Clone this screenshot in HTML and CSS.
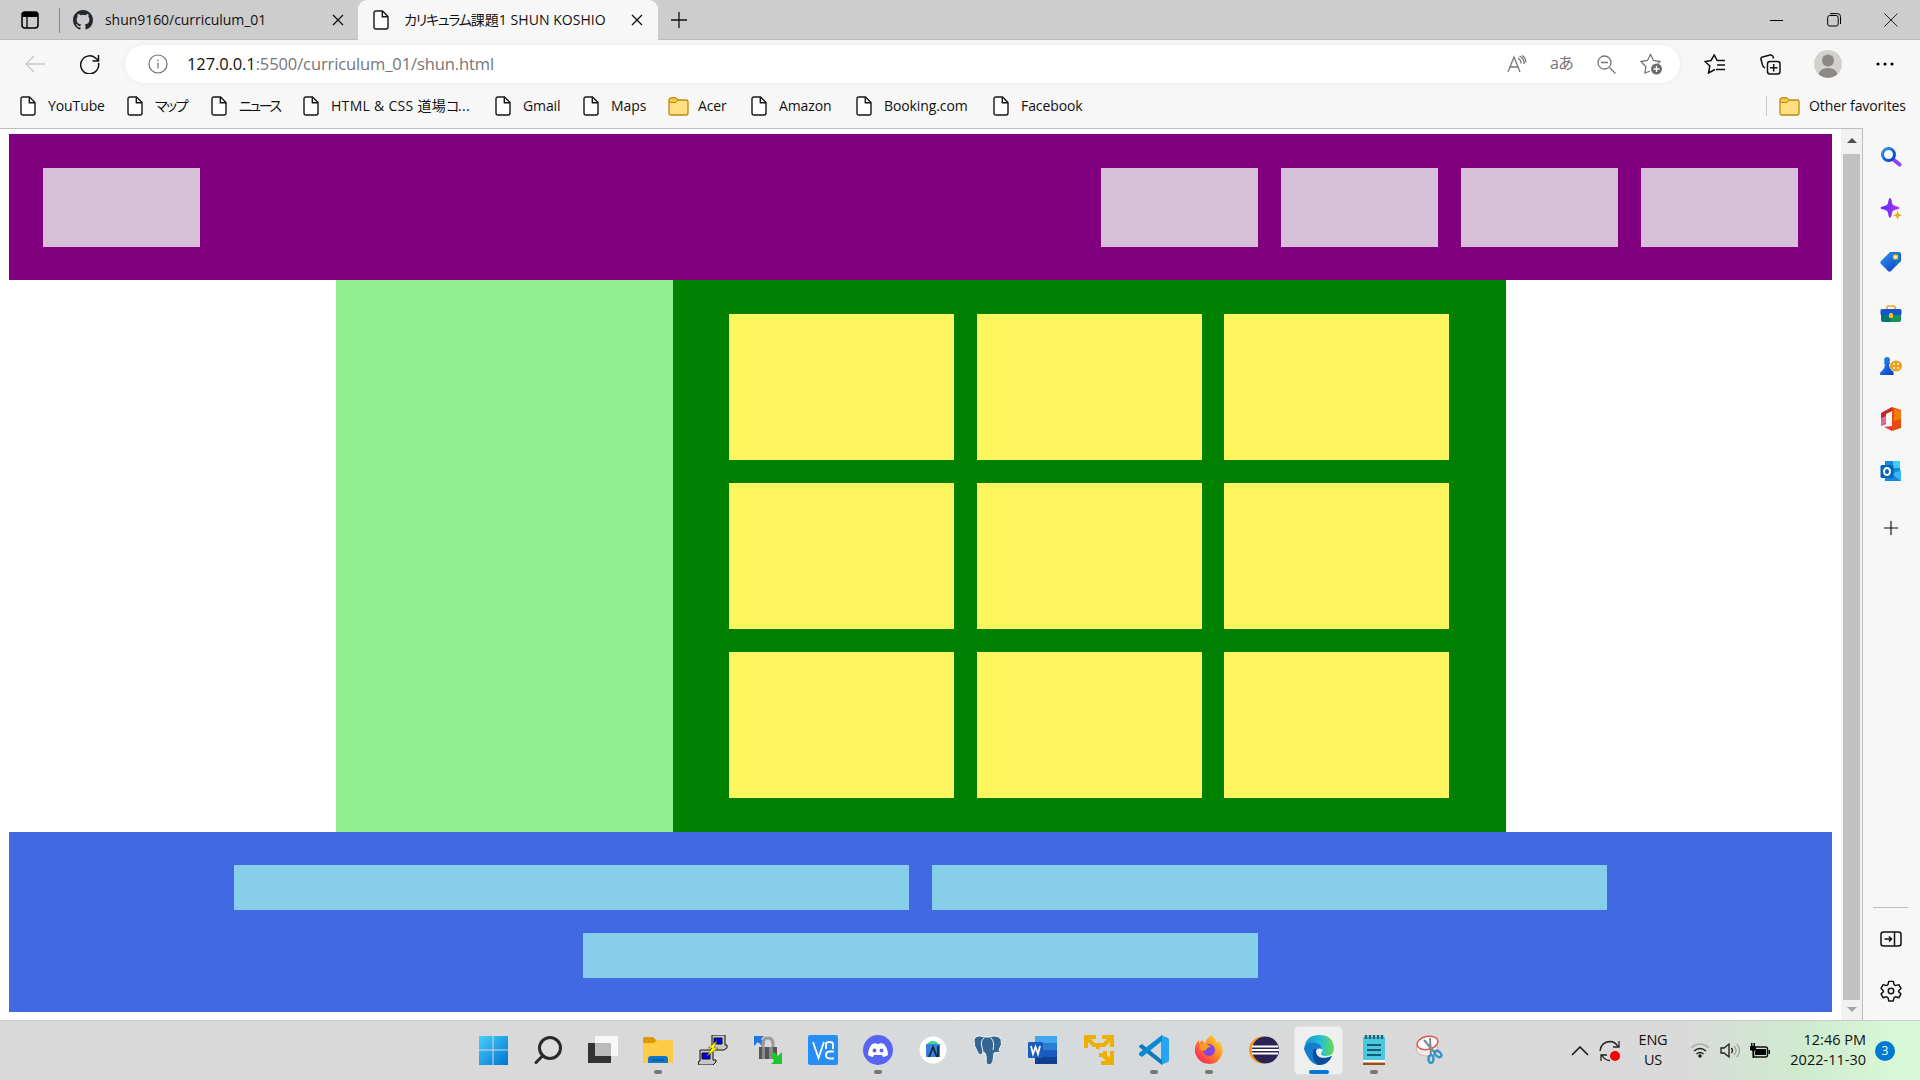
FILE: index.html
```html
<!DOCTYPE html>
<html lang="ja">
<head>
<meta charset="utf-8">
<title>カリキュラム課題1 SHUN KOSHIO</title>
<link rel="stylesheet" href="styles.css">
</head>
<body>
<svg class="defs" width="0" height="0" aria-hidden="true">
  <symbol id="file" viewBox="0 0 16 20"><path d="M3 1h6.500L15 6.500V17q0 2-2 2H3q-2 0-2-2V3q0-2 2-2zM9.300 1.300v5.400h5.400" fill="#fff" stroke="#161616" stroke-width="1.400"/></symbol>
  <symbol id="folder" viewBox="0 0 21 19"><path d="M1 4q0-3 2.500-3h4L10 3h8q2 0 2 2v11q0 2-2 2H3q-2 0-2-2z" fill="#ffdf82" stroke="#b88a12" stroke-width="1.300"/><path d="M1 4q0-3 2.500-3H8l2 2-2 2.500H3Q1 5.500 1 4z" fill="#f9ca3e" stroke="#b88a12"/></symbol>
  <symbol id="x" viewBox="0 0 12 12"><path d="M1 1l10 10M11 1L1 11" stroke="#111" stroke-width="1.300"/></symbol>
  <symbol id="plus" viewBox="0 0 18 18"><path d="M9 1v16M1 9h16" stroke="#111" stroke-width="1.300"/></symbol>
</svg>
<div class="screen">
  <header class="tabs">
    <div class="workspaces"><svg width="18" height="18" viewBox="0 0 18 18"><rect x="1" y="1" width="16" height="16" rx="3" fill="none" stroke="#000" stroke-width="1.500"/><path d="M1 6V4q0-3 3-3h10q3 0 3 3v2z"/><path d="M6 6v11" stroke="#000" stroke-width="1.300"/></svg></div>
    <div class="tab">
      <svg width="20" height="20" viewBox="0 0 16 16"><path fill="#24292f" d="M8 0C3.580 0 0 3.580 0 8c0 3.540 2.290 6.530 5.470 7.590.4.070.55-.17.55-.38 0-.19-.01-.82-.01-1.490-2.010.37-2.530-.49-2.690-.94-.09-.23-.48-.94-.82-1.130-.28-.15-.68-.52-.01-.53.63-.01 1.080.58 1.230.82.72 1.210 1.870.87 2.330.66.070-.52.28-.87.51-1.070-1.780-.2-3.640-.89-3.640-3.950 0-.87.31-1.590.82-2.150-.08-.2-.36-1.020.08-2.120 0 0 .67-.21 2.200.82a7.600 7.600 0 0 1 4 0c1.530-1.040 2.200-.82 2.200-.82.44 1.100.16 1.920.08 2.120.51.56.82 1.270.82 2.150 0 3.070-1.870 3.750-3.650 3.950.29.25.54.73.54 1.480 0 1.070-.01 1.930-.01 2.200 0 .21.15.46.55.38A8 8 0 0 0 16 8c0-4.420-3.580-8-8-8z"/></svg>
      <span class="tab-title">shun9160/curriculum_01</span><svg width="12" height="12"><use href="#x"/></svg>
    </div>
    <div class="tab active">
      <svg width="16" height="20"><use href="#file"/></svg>
      <span class="tab-title"><span class="kana">カリキュラム</span>課題1 SHUN KOSHIO</span><svg width="12" height="12"><use href="#x"/></svg>
    </div>
    <svg class="new-tab" width="18" height="18"><use href="#plus"/></svg>
    <div class="window-buttons">
      <svg width="14" height="14"><path d="M0 7.500h13" stroke="#000"/></svg>
      <svg width="14" height="14" fill="none" stroke="#000"><rect x=".7" y="2.500" width="10.500" height="10.500" rx="2"/><path d="M3 .6h7.500q3 0 3 3V11"/></svg>
      <svg width="14" height="14"><path d="M.5.5l13 13M13.500.5l-13 13" stroke="#222"/></svg>
    </div>
  </header>

  <div class="toolbar">
    <div class="cell back"><svg width="20" height="18" fill="none" stroke="#c9c9c9" stroke-width="1.400"><path d="M20 9H1M9 1L1 9l8 8"/></svg></div>
    <div class="cell refresh"><svg width="20" height="20" fill="none" stroke="#111" stroke-width="1.500"><path d="M18.500 9A9 9 0 1 1 15.500 4l3 2.500M18.500 1v6h-6"/></svg></div>
    <div class="address">
      <div class="cell info"><svg width="20" height="20" fill="none" stroke="#707070" stroke-width="1.200"><circle cx="10" cy="10" r="9"/><path d="M10 8.500v6M10 5.500v1.500"/></svg></div>
      <div class="url"><b>127.0.0.1</b>:5500/curriculum_01/shun.html</div>
      <div class="cell"><svg width="20" height="18" fill="none" stroke="#767676" stroke-width="1.300"><path d="M1 17L7 2l6 15M3.200 12h7.600M11 3q3 2 3 5.500M12.500 1q5 2.500 4.500 8M15 .5q4 2.500 4 7"/></svg></div>
      <div class="cell translate">aあ</div>
      <div class="cell"><svg width="19" height="19" fill="none" stroke="#767676" stroke-width="1.300"><circle cx="7.500" cy="7.500" r="6.500"/><path d="M4 7.500h7M12.500 12.500l6 6"/></svg></div>
      <div class="cell"><svg width="23" height="22" fill="none" stroke="#767676" stroke-width="1.300"><path d="M10 18l-5 2 .8-6.500L1 8.500l6.500-1L10.500 1.500l3 6 6.500 1-2 2"/><circle cx="16.500" cy="16" r="5.500" fill="#6c6c6c" stroke="none"/><path d="M13.500 16h6M16.500 13v6" stroke="#fff"/></svg></div>
    </div>
    <div class="cell w70"><svg width="22" height="20" fill="none" stroke="#111" stroke-width="1.500"><path d="M10 16l-5.500 3 1.300-7L1 7.500l6-1 3.200-5.500 3 5.500H21M13 11h8M12 15.500h9M10 16l1-.5"/></svg></div>
    <div class="cell w40"><svg width="21" height="21" fill="none" stroke="#111" stroke-width="1.500"><rect x="7.500" y="7.500" width="12.500" height="12.500" rx="2.500"/><path d="M13.700 10v7.500M10 13.700h7.500M5 14Q3 13 2.500 11L1 5.500Q.5 3.500 2.500 3L10 1q2-.5 3 1.500l.5 2"/></svg></div>
    <div class="cell w76"><svg width="28" height="28"><circle cx="14" cy="14" r="14" fill="#d3d1ce"/><circle cx="14" cy="10.500" r="6" fill="#8c8885"/><path d="M4.500 24q2-6 9.500-6t9.500 6A14 14 0 0 1 4.500 24z" fill="#8c8885"/></svg></div>
    <div class="cell w38"><svg width="18" height="4"><circle cx="2" cy="2" r="1.600"/><circle cx="9" cy="2" r="1.600"/><circle cx="16" cy="2" r="1.600"/></svg></div>
  </div>

  <nav class="bookmarks">
    <div class="mark"><svg width="16" height="20"><use href="#file"/></svg><span>YouTube</span></div>
    <div class="mark"><svg width="16" height="20"><use href="#file"/></svg><span class="kana">マップ</span></div>
    <div class="mark"><svg width="16" height="20"><use href="#file"/></svg><span class="kana tight">ニュース</span></div>
    <div class="mark long"><svg width="16" height="20"><use href="#file"/></svg><span>HTML &amp; CSS 道場<span class="kana">コ</span>...</span></div>
    <div class="mark"><svg width="16" height="20"><use href="#file"/></svg><span>Gmail</span></div>
    <div class="mark"><svg width="16" height="20"><use href="#file"/></svg><span>Maps</span></div>
    <div class="mark folder"><svg width="21" height="19"><use href="#folder"/></svg><span>Acer</span></div>
    <div class="mark"><svg width="16" height="20"><use href="#file"/></svg><span>Amazon</span></div>
    <div class="mark"><svg width="16" height="20"><use href="#file"/></svg><span>Booking.com</span></div>
    <div class="mark"><svg width="16" height="20"><use href="#file"/></svg><span>Facebook</span></div>
    <div class="mark folder other"><svg width="21" height="19"><use href="#folder"/></svg><span>Other favorites</span></div>
  </nav>

  <div class="browser-body">
    <main class="page">
      <div class="page-header"><div class="logo"></div><div class="menu"><i></i><i></i><i></i><i></i></div></div>
      <div class="page-main">
        <aside class="page-side"></aside>
        <section class="cards"><i></i><i></i><i></i><i></i><i></i><i></i><i></i><i></i><i></i></section>
      </div>
      <footer class="page-footer"><i></i><i></i><i></i></footer>
    </main>
    <div class="scrollbar"><span class="up"></span><span class="thumb"></span><span class="down"></span></div>
    <aside class="sidebar">
      <div class="tool"><svg width="22" height="22"><defs><linearGradient id="b" x2="1" y2="1"><stop stop-color="#2f9bea"/><stop offset="1" stop-color="#0b35cc"/></linearGradient></defs><path d="M14 14l5.500 4.500" stroke="#8b45f4" stroke-width="4" stroke-linecap="round"/><circle cx="8.500" cy="8.500" r="6" fill="#f4faff" stroke="url(#b)" stroke-width="3"/></svg></div>
      <div class="tool"><svg width="22" height="22"><defs><linearGradient id="v" x2="1"><stop stop-color="#5426ff"/><stop offset="1" stop-color="#b43bf5"/></linearGradient></defs><path d="M10 0q1.500 0 2 5 .5 2.500 3.500 3 4 .8 4 2t-4 1.700q-3 .5-3.500 3-.7 5-2 5t-2-5q-.5-2.500-3.500-3Q.5 11 .5 10t4-2Q7.500 7.500 8 5q.7-5 2-5z" fill="url(#v)"/><path d="M17.500 12.500l1.200 3.500 3.300 1.300-3.300 1.200-1.200 3.500-1.200-3.500-3.300-1.200 3.300-1.300z" fill="#f2aa0d"/></svg></div>
      <div class="tool"><svg width="22" height="22"><path d="M10 1h9q2 0 2 2v7L11 20q-1.500 1.300-3 0L1 13q-1.300-1.500 0-3z" fill="url(#b)"/><path d="M13 2h6q1 0 1 1v7l-9 9Q20 9 13 2z" fill="#087fc5"/><circle cx="15.500" cy="6" r="2" fill="#fff" stroke="#ffbc20" stroke-width="1.500"/></svg></div>
      <div class="tool"><svg width="22" height="18"><path d="M7 6V2.500Q7 1 8.500 1h5Q15 1 15 2.500V6" fill="none" stroke="#e9aa19" stroke-width="1.700"/><path d="M1 7h20v8q0 2-2 2H3q-2 0-2-2z" fill="#06776d"/><path d="M11 7h9v10h-9z" fill="#149553"/><rect x=".5" y="4" width="21" height="6" rx="1.500" fill="#1454cf"/><rect x="9" y="8" width="4" height="5" rx="1.500" fill="#ffc42c"/></svg></div>
      <div class="tool"><svg width="22" height="20"><ellipse cx="16" cy="10" rx="6" ry="5.500" fill="#eaa31c"/><g fill="#fff4c9"><circle cx="14" cy="8" r="1.100"/><circle cx="18" cy="8" r="1.100"/><circle cx="14" cy="12" r="1.100"/><circle cx="18" cy="12" r="1.100"/></g><path d="M7 1q3 0 3 3 0 1.500-1 2.500h1V8H9q0 4 3 7 2 0 1.500 4H0q0-4 2-4 3-3 3-7H4V6.500h1Q4 5.500 4 4q0-3 3-3z" fill="url(#b)"/></svg></div>
      <div class="tool"><svg width="22" height="24"><path d="M1 6L12 0v4L6 7v10l-5 2z" fill="#c8242b"/><path d="M1 11l5-2v7l-5 3z" fill="#e26a9d"/><path d="M12 0l9 3v18l-9 3z" fill="#e84a0b"/><path d="M14 2l7 2v8l-7 2z" fill="#f37b0c"/><path d="M4 20l8-1v5z" fill="#e9373c"/></svg></div>
      <div class="tool"><svg width="22" height="22"><path d="M5 1h15v10l1 1v9H5z" fill="#1688dc"/><path d="M13 1h7v7h-7z" fill="#40caff"/><path d="M12 14l9-4v11z" fill="#38baf0"/><rect x=".5" y="5" width="13" height="13" rx="1.500" fill="#0465b6"/><ellipse cx="7" cy="11.500" rx="3" ry="3.500" fill="none" stroke="#fff" stroke-width="2"/></svg></div>
      <div class="tool add"><svg width="16" height="16" viewBox="0 0 18 18"><use href="#plus"/></svg></div>
      <hr>
      <div class="tool"><svg width="22" height="16" fill="none" stroke="#111" stroke-width="1.500"><rect x="1" y="1" width="20" height="14" rx="2.500"/><path d="M14.500 1v14M4.500 8h7M9 5.500L11.500 8 9 10.500"/></svg></div>
      <div class="tool"><svg width="22" height="22" viewBox="0 0 24 24" fill="none" stroke="#111" stroke-width="1.600" stroke-linejoin="round"><circle cx="12" cy="12" r="3"/><path d="M9.500 1.500h5l.8 3.600 1.700 1 3.500-1.100 2.400 4.200-2.600 2.500v1l2.600 2.500-2.400 4.200-3.500-1.100-1.700 1-.8 3.500h-5l-.8-3.500-1.700-1-3.500 1.100-2.400-4.200 2.600-2.500v-1L1.100 9.200 3.500 5 7 6.100l1.700-1z"/></svg></div>
    </aside>
  </div>

  <footer class="taskbar">
    <div class="apps">
      <div class="app"><svg width="30" height="30"><defs><linearGradient id="w" x2="1" y2="1"><stop stop-color="#45d0fb"/><stop offset="1" stop-color="#0072d2"/></linearGradient></defs><path d="M1 1h13.500v13.500H1zM15.500 1H30v13.500H15.500zM1 15.500h13.500V30H1zM15.500 15.500H30V30H15.500z" fill="url(#w)"/></svg></div>
      <div class="app"><svg width="30" height="30" fill="none" stroke="#292929" stroke-width="3"><circle cx="17" cy="13" r="10.500" fill="#ddd"/><path d="M10 20.500L3 27.500" stroke-linecap="round"/></svg></div>
      <div class="app"><svg width="30" height="30"><path d="M0 8h23v20H0z" fill="#333"/><path d="M7 1h23v20H7z" fill="#f7f7f7"/><path d="M7 8h16v13H7z" fill="#bbb"/></svg></div>
      <div class="app open"><svg width="30" height="30"><path d="M0 4q0-2 2-2h8l3 3h15q2 0 2 2v6H0z" fill="#dc9904"/><path d="M0 8h11l3-3h14q2 0 2 2v21H0z" fill="#ffcc48"/><path d="M5 28v-4q0-3 3-3h14q3 0 3 3v4z" fill="#1277c9"/><path d="M9 25h12" stroke="#074c8d" stroke-width="1.300"/></svg></div>
      <div class="app"><svg width="30" height="30" stroke="#111"><path d="M14 0h13v10h2v3l-3 2H13l1-3z" fill="#c7c7c7"/><path d="M16 3h8v6h-8z" fill="#00e"/><path d="M2 15h13v10h3v2l-3 3H0l1-4h1z" fill="#c7c7c7"/><path d="M4 18h8v6H4z" fill="#00e"/><path d="M19 6l-9 7h4l-5 8 11-8h-4z" fill="#ff0" stroke="#660" stroke-width=".6"/></svg></div>
      <div class="app"><svg width="30" height="30"><path d="M1 1h10L8 4l4 4-3 3-4-4-4 4z" fill="#2076e5"/><path d="M10 12V9q0-6 5-6t5 6v3" fill="none" stroke="#9b9b9b" stroke-width="3"/><path d="M6 12h18v12H6z" fill="#555"/><path d="M9 12h3v12H9zM16 12h4v12h-4z" fill="#8a8a8a"/><path d="M18 20l3-3 4 4 4-4v12H18l3-3z" fill="#20c52c"/></svg></div>
      <div class="app"><svg width="30" height="30" fill="none" stroke="#fff" stroke-width="1.800"><rect width="30" height="30" rx="2" fill="#298df6" stroke="none"/><path d="M5 7l5.500 16L16 7M18 14V9q0-2 3.500-2T25 9v5M26 16.500h-4q-4 0-4 3.500t4 3.500h4"/></svg></div>
      <div class="app open"><svg width="30" height="30"><circle cx="15" cy="15" r="15" fill="#5865f2"/><path d="M9 9l4-1 1 1h2l1-1 4 1q4 5 4 11-3 2-5 2l-1-2h-8l-1 2q-2 0-5-2 0-6 4-11z" fill="#fff"/><ellipse cx="11.500" cy="15.500" rx="1.900" ry="2.100" fill="#5865f2"/><ellipse cx="18.500" cy="15.500" rx="1.900" ry="2.100" fill="#5865f2"/></svg></div>
      <div class="app"><svg width="30" height="30"><circle cx="15" cy="15" r="13.500" fill="#fff"/><path d="M9 10q1-4 6-4t5 4" fill="#3ddc84"/><path d="M8 9h14v13H8z" fill="#387edb"/><path d="M11 22l4-10 4 10M20 11v11" fill="none" stroke="#0c2540" stroke-width="1.700"/></svg></div>
      <div class="app"><svg width="30" height="30" stroke="#eef6fc" stroke-width="1"><path d="M11 2q-7-3-10 2-1 6 4 14 3 4 5-1l2 1q2 3 1 8 0 4 3 4t4-4l1-8 6-1q1-1-1-2 4-6 2-11-5-5-11-2z" fill="#336791"/><path d="M11 3q-4 3-2 9l1 5M18 3q4 4 2 12" fill="none"/></svg></div>
      <div class="app"><svg width="30" height="30"><path d="M7 1h22v7H7z" fill="#41a5ee"/><path d="M7 8h22v7H7z" fill="#2b7cd3"/><path d="M7 15h22v7H7z" fill="#185abd"/><path d="M7 22h22v7H7z" fill="#103f91"/><rect y="7" width="15" height="16" rx="1" fill="#1b5cc0"/><path d="M3 11l2 8 2.500-7 2.500 7 2-8" fill="none" stroke="#fff" stroke-width="1.800"/></svg></div>
      <div class="app"><svg width="30" height="30" fill="#eeb000"><path d="M0 0h12v4H7l4 4h8l4-4h-5V0h12v12h-4V7l-5 5h-5v2h-4v-2H9L4 7v6H0z"/><path d="M26 16h4v14H17v-4h5l-4-4h-3v-4h4v-2h4v4l3 3z"/></svg></div>
      <div class="app open"><svg width="30" height="30"><path d="M22 0l7 3q1 .5 1 2v20q0 1.500-1 2l-7 3z" fill="#25a5f4"/><path d="M0 11l3-2 20 16v5L0 12z" fill="#1178bd"/><path d="M0 20l3 2L23 6V0L0 18z" fill="#078bd2"/></svg></div>
      <div class="app open"><svg width="30" height="30"><defs><linearGradient id="f" x1="1" x2="0" y2="1"><stop stop-color="#fff044"/><stop offset=".45" stop-color="#ff8a21"/><stop offset="1" stop-color="#f50b6b"/></linearGradient></defs><path d="M18 0q4 5 5 8l2-2q5 6 3 13-3 10-13 10T1 18Q0 10 5 5v4l3-4 3 4q2-7 7-9z" fill="url(#f)"/><circle cx="15" cy="15" r="6" fill="#8046df"/><path d="M6 9q6-2 11 3-4 0-5 3-4 2-7-2z" fill="#ff9a20"/></svg></div>
      <div class="app"><svg width="30" height="30"><circle cx="13.500" cy="15" r="13.500" fill="#f69a22"/><circle cx="16.500" cy="15" r="13.500" fill="#2c2255"/><path d="M3 11.500h26M3 15h27M3 18.500h26" stroke="#fff" stroke-width="2"/></svg></div>
      <div class="app current"><svg width="30" height="30"><defs><linearGradient id="e" x2="1"><stop stop-color="#1694d7"/><stop offset=".55" stop-color="#26bdd3"/><stop offset="1" stop-color="#69db48"/></linearGradient></defs><path d="M0 15Q1 0 15 0t15 13q0 8-8 8-6 0-5-3 3-3 0-6Q8 5 0 15z" fill="url(#e)"/><path d="M0 14q3-8 11-6 6 1 7 6-6-2-6 3 1 8 13 5l3-1q-4 9-13 9T0 14z" fill="#147cd1"/><path d="M10 14q-4 9 4 16 10 0 14-9-7 4-13 1-4-3-3-8z" fill="#0b4d9b"/></svg></div>
      <div class="app open"><svg width="30" height="30"><path d="M4 27h22v3H4z" fill="#9c4d15"/><path d="M4 2h22v24H4z" fill="#4cc7dd"/><path d="M4 25h22v2.500H4z" fill="#fff"/><path d="M8 10h14M8 15h14M8 20h14" stroke="#145c74" stroke-width="2"/><path d="M7 0v4M11 0v4M15 0v4M19 0v4M23 0v4" stroke="#1a687e" stroke-width="2.500"/></svg></div>
      <div class="app"><svg width="30" height="30"><ellipse cx="13" cy="14" rx="11" ry="7" fill="#eee" stroke="#e7a3a1"/><ellipse cx="13.500" cy="8" rx="10.500" ry="6.500" fill="#fff" stroke="#db5555" stroke-width="1.500" transform="rotate(-12 13 8)"/><path d="M10 5l11 13M16 3l1 18" stroke="#7c8791" stroke-width="2"/><g fill="none" stroke="#3297c9" stroke-width="2.500"><ellipse cx="17" cy="24" rx="2.500" ry="4"/><ellipse cx="24" cy="19" rx="4" ry="2.500" transform="rotate(40 24 19)"/></g></svg></div>
    </div>
    <div class="tray">
      <svg width="18" height="10"><path d="M1 9l8-8 8 8" fill="none" stroke="#111" stroke-width="1.500"/></svg>
      <svg width="22" height="22" fill="none" stroke="#222" stroke-width="1.300"><path d="M1 11Q2 2 11 1.500q5 0 8 5M20 1v6h-6M11 20.500q-5 0-8-5M2 21v-6h6"/><circle cx="16" cy="16" r="5" fill="#f00" stroke="none"/></svg>
      <div class="language">ENG<br>US</div>
      <svg width="20" height="16" fill="none" stroke="#1b1b1b" stroke-width="1.400"><path d="M1 5q9-8 18 0" stroke="#aaa"/><path d="M4 8q6-5 12 0M6.500 11q3.500-3 7 0"/><circle cx="10" cy="13" r="1.700" fill="#111" stroke="none"/></svg>
      <svg width="20" height="18" fill="none" stroke="#1b1b1b" stroke-width="1.300"><path d="M1 6h3l5-4v13l-5-4H1zM11.500 6q2 2.500 0 5"/><path d="M14 4q4 4.500 0 9M17 2q5 6.500 0 13" stroke="#9fa69f"/></svg>
      <svg width="20" height="16"><rect x="3.500" y="4" width="14" height="10" rx="2" fill="none" stroke="#111" stroke-width="1.400"/><path d="M6 6h10v6H5V9zM18.500 7H20v4h-1.500zM0 3h1V0h1.500v3h1V0H5v3h1v4L4 8v7H2.500V8L0 7z"/></svg>
      <div class="clock">12:46 PM<br>2022-11-30</div>
      <div class="badge">3</div>
    </div>
  </footer>
</div>
</body>
</html>
```

FILE: styles.css
```css
* { box-sizing: border-box; }
body { margin: 0; background: #fff; }
.defs { display: block; }
.screen {
  width: 1920px; height: 1080px; overflow: hidden;
  display: flex; flex-direction: column;
  font: 14px/20px "Open Sans", "Noto Sans", "Noto Sans CJK JP", sans-serif;
  color: #111; background: #f7f7f7; white-space: nowrap;
}
svg { display: block; flex: none; }
i { display: block; }
.cell { display: flex; align-items: center; justify-content: center; flex: none; }
.kana { font-feature-settings: "palt"; letter-spacing: -1.500px; }
.kana.tight { letter-spacing: -2.500px; }

/* tab strip */
.tabs { height: 40px; flex: none; display: flex; align-items: center; background: #cdcdcd; box-shadow: inset 0 -1px #bdbdbd; }
.workspaces { width: 60px; height: 25px; padding-left: 21px; border-right: 1px solid #888; display: flex; align-items: center; }
.tab { width: 298px; height: 40px; padding: 0 14px 0 13px; display: flex; align-items: center; }
.tab.active { width: 300px; padding: 0 15px; background: #f7f7f7; border-radius: 9px 9px 0 0; }
.tab-title { flex: 1; margin-left: 12px; letter-spacing: -.050px; }
.active .tab-title { margin-left: 15px; letter-spacing: .050px; }
.active .kana { letter-spacing: -1.250px; }
.new-tab { margin-left: 12px; }
.window-buttons { margin-left: auto; padding-right: 22px; display: flex; gap: 43px; }

/* address bar */
.toolbar { height: 48px; flex: none; display: flex; align-items: center; }
.back { width: 70px; }
.refresh { width: 40px; margin-right: 15px; }
.address { width: 1555px; height: 38px; padding-right: 6px; border-radius: 19px; background: #fff; display: flex; align-items: center; box-shadow: 0 0 4px #e6e6e6; }
.address .cell { width: 45px; }
.address .info { width: 62px; padding-left: 3px; }
.url { flex: 1; font-size: 16.500px; color: #767676; letter-spacing: -.110px; }
.url b { font-weight: 400; color: #111; }
.address .translate { font-size: 16px; color: #767676; letter-spacing: -1px; padding-bottom: 2px; }
.w70 { width: 70px; }
.w40 { width: 40px; }
.w76 { width: 76px; }
.w38 { width: 38px; }

/* favourites */
.bookmarks {
  height: 40px; flex: none; padding: 0 0 4px 20px; align-items: center; display: grid;
  grid-template-columns: 107px 84px 92px 192px 88px 85px 83px 105px 137px 773px 154px;
}
.mark { height: 20px; display: flex; align-items: center; gap: 12px; letter-spacing: -.100px; }
.mark.long { letter-spacing: .300px; }
.mark.folder { gap: 9px; }
.mark.other { padding-left: 12px; border-left: 1px solid #ccc; }

/* viewport */
.browser-body { height: 892px; flex: none; display: flex; }
.page { width: 1841px; padding: 5px 9px 8px; border-top: 1px solid #bdbdbd; background: #fff; }
.page-header { height: 146px; padding: 34px; display: flex; justify-content: space-between; background: purple; }
.logo, .menu i { width: 157px; height: 79px; background: thistle; }
.menu { display: flex; gap: 23px; }
.page-main { height: 552px; margin-left: 327px; display: flex; }
.page-side { width: 337px; background: lightgreen; }
.cards { width: 833px; padding: 34px 56px; display: grid; grid-template: repeat(3, 146px) / repeat(3, 225px); gap: 23px 22.500px; background: green; }
.cards i { background: #fdf65f; }
.page-footer { height: 180px; padding: 33px 225px 34px; display: flex; flex-wrap: wrap; justify-content: center; align-content: flex-start; gap: 23px; background: royalblue; }
.page-footer i { width: 675px; height: 45px; background: skyblue; }
.scrollbar { width: 22px; display: flex; flex-direction: column; align-items: center; background: #f1f1f1; border: solid #bdbdbd; border-width: 1px 1px 0 0; }
.up { margin: 9px 0 11px; border: 5px solid transparent; border-top: 0; border-bottom-color: #505050; }
.thumb { width: 17px; height: 846px; background: #c1c1c1; }
.down { margin-top: 7px; border: 5px solid transparent; border-bottom: 0; border-top-color: #a3a3a3; }
.sidebar { width: 57px; padding: 3px 2px 3px 0; display: flex; flex-direction: column; align-items: center; }
.tool { height: 52.300px; flex: none; display: flex; align-items: center; }
.tool.add { height: 62px; }
.sidebar hr { width: 35px; height: 1px; margin: auto 0 4px; border: 0; background: #bdbdbd; }

/* taskbar */
.taskbar {
  height: 60px; flex: none; display: flex; padding-left: 465px; border-top: 1px solid #cbcbcb;
  background: linear-gradient(90deg, #d9d9d9 0 800px, #d5dadd 1050px, #d9d9d9 1350px, #dadada 1690px, #ceebce 1800px, #d9f8d7 1900px);
}
.apps { display: flex; }
.app { width: 55.100px; height: 59px; padding-top: 14px; display: flex; flex-direction: column; align-items: center; }
.open::after { content: ""; width: 8px; height: 4px; margin-top: 5px; border-radius: 2px; background: #777; }
.current { width: 49px; height: 49px; margin: 5px 3.050px 0; padding-top: 8px; background: #eeefef; border-radius: 5px; border: 1px solid #e4e4e4; }
.current::after { content: ""; width: 20px; height: 4px; margin-top: 5px; border-radius: 2px; background: #0078d4; }
.tray { margin-left: auto; padding-right: 25px; display: flex; align-items: center; font-size: 14.500px; }
.tray > svg + svg { margin-left: 10px; }
.language { width: 44px; margin: -2px 15px 0 10px; text-align: center; letter-spacing: -.200px; }
.clock { width: 86px; margin: -2px 9px 0 10px; text-align: right; letter-spacing: 0; }
.badge { width: 20px; height: 20px; border-radius: 50%; background: #0078d4; color: #fff; font-size: 12px; text-align: center; }
```
